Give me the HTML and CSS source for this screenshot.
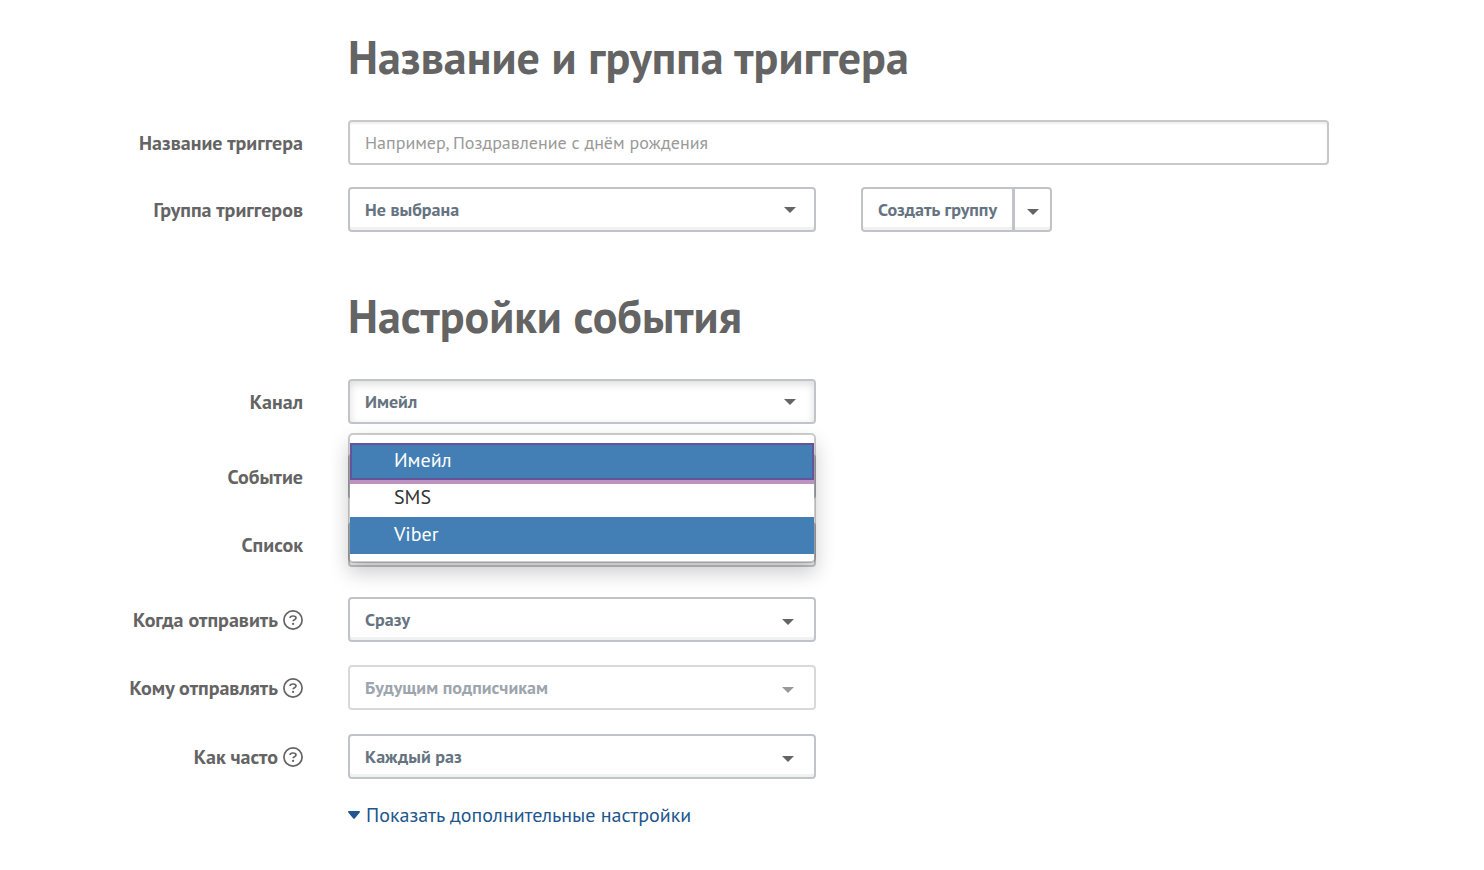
FILE: index.html
```html
<!DOCTYPE html>
<html lang="ru">
<head>
  <meta charset="utf-8">
  <meta name="viewport" content="width=device-width, initial-scale=1">
  <title>Название и группа триггера</title>
  <link rel="stylesheet" href="styles.css">
</head>
<body>
  <svg class="sprite" aria-hidden="true">
    <symbol id="help" viewBox="0 0 20 20">
      <circle cx="10" cy="10" r="9.100" fill="none" stroke="currentColor" stroke-width="1.7"/>
      <path d="M7.1 8C7.100 6.600 8.400 6 10 6s3 .7 3 2c0 1.800-2.900 1.600-2.900 3.300" fill="none" stroke="currentColor" stroke-width="1.7"/>
      <circle cx="10.1" cy="13.900" r="1.1" fill="currentColor"/>
    </symbol>
  </svg>
  <form class="form">
    <section class="section">
      <h2 class="title">Название и группа триггера</h2>
      <div class="row row-tight">
        <label class="label" for="name">Название триггера</label>
        <input class="control input wide" id="name" type="text" placeholder="Например, Поздравление с днём рождения">
      </div>
      <div class="row">
        <label class="label" for="group">Группа триггеров</label>
        <div class="select select-rich">
          <select class="control" id="group"><option>Не выбрана</option></select>
        </div>
        <div class="split">
          <button class="control split-main" type="button">Создать группу</button>
          <button class="control split-toggle" type="button" aria-haspopup="true"><span class="caret"></span></button>
        </div>
      </div>
    </section>

    <section class="section">
      <h2 class="title">Настройки события</h2>
      <div class="row row-spaced">
        <label class="label" for="channel">Канал</label>
        <div class="select select-rich">
          <select class="control pressed" id="channel"><option>Имейл</option></select>
          <ul class="menu" role="listbox">
            <li class="option selected focused" role="option" aria-selected="true">Имейл</li>
            <li class="option" role="option">SMS</li>
            <li class="option selected" role="option">Viber</li>
          </ul>
        </div>
      </div>
      <div class="row">
        <label class="label" for="event">Событие</label>
        <div class="select"><select class="control" id="event"></select></div>
      </div>
      <div class="row row-spaced">
        <label class="label" for="list">Список</label>
        <div class="select"><select class="control" id="list"></select></div>
      </div>
      <div class="row">
        <label class="label" for="when">Когда отправить <svg class="help"><use href="#help"/></svg></label>
        <div class="select"><select class="control" id="when"><option>Сразу</option></select></div>
      </div>
      <div class="row row-loose">
        <label class="label" for="whom">Кому отправлять <svg class="help"><use href="#help"/></svg></label>
        <div class="select select-disabled"><select class="control" id="whom" disabled><option>Будущим подписчикам</option></select></div>
      </div>
      <div class="row row-loose">
        <label class="label" for="often">Как часто <svg class="help"><use href="#help"/></svg></label>
        <div class="select"><select class="control" id="often"><option>Каждый раз</option></select></div>
      </div>
      <div class="row">
        <a class="more" href="#more"><svg class="more-caret" viewBox="0 0 12 8"><path d="M.8 0h10.4q1.2.3.5 1.5L7 7.2q-1 1-2 0L.3 1.500Q-.4.3.8 0Z" fill="currentColor"/></svg>Показать дополнительные настройки</a>
      </div>
    </section>
  </form>
</body>
</html>
```
FILE: styles.css
```css
* { box-sizing: border-box; }

body {
  margin: 0;
  background: #fff;
  color: #646464;
  font: 20px/24px "PT Sans", "Noto Sans", sans-serif;
}

.sprite { position: absolute; width: 0; height: 0; }

.form { padding: 30px 155px 40px 0; }

.section + .section { margin-top: 57px; }

.title {
  margin: 0 0 36px 348px;
  font-size: 46px;
  line-height: 54px;
  font-weight: 700;
}

.row {
  display: grid;
  grid-template-columns: 303px minmax(0, 1fr) minmax(0, 1fr);
  column-gap: 45px;
  align-items: center;
  margin-bottom: 23px;
}

.row:last-child { margin-bottom: 0; }
.row-tight { margin-bottom: 22px; }
.row-loose { margin-bottom: 24px; }
.row-spaced { margin-bottom: 30px; }

.label {
  display: flex;
  justify-content: flex-end;
  align-items: center;
  gap: 5px;
  font-weight: 700;
}

.help { width: 20px; height: 20px; }

.wide { grid-column: 2 / 4; }

.control {
  display: block;
  width: 100%;
  height: 45px;
  margin: 0;
  padding: 0 15px;
  border: 2px solid #c0c4c9;
  border-radius: 4px;
  background: #fff;
  box-shadow: inset 0 -3px 0 #f0f1f1;
  color: #667381;
  font: 700 18px/24px "PT Sans", "Noto Sans", sans-serif;
  appearance: none;
}

.input {
  border-color: #c9c9c9;
  box-shadow: inset 0 2px 2px #efefef;
  font-weight: 400;
}

.input::placeholder { color: #999; opacity: 1; }

.pressed { box-shadow: inset 0 3px 8px #dcdcdc; }

.select { position: relative; }

.select::after,
.caret {
  border: 6px solid transparent;
  border-top-color: #646464;
  border-bottom: 0;
}

.select::after {
  content: "";
  position: absolute;
  top: 22px;
  right: 22px;
  pointer-events: none;
}

.select-rich::after { top: 20px; right: 20px; }

.select-disabled::after { border-top-color: #999; }

.control:disabled {
  border-color: #d8dada;
  box-shadow: none;
  color: #9da5ae;
  opacity: 1;
}

.split { display: flex; }

.split-main {
  width: auto;
  border-radius: 4px 0 0 4px;
  border-right-width: 1px;
}

.split-toggle {
  display: flex;
  align-items: center;
  justify-content: center;
  width: 39px;
  padding: 4px 0 0;
  border-radius: 0 4px 4px 0;
}

.menu {
  position: absolute;
  z-index: 2;
  top: 54px;
  left: 0;
  right: 0;
  margin: 0;
  padding: 8px 0 7px;
  border: 2px solid rgba(0, 0, 0, .2);
  border-radius: 5px;
  background: #fff;
  background-clip: padding-box;
  box-shadow: 0 10px 20px rgba(0, 0, 0, .2);
  color: #333;
  list-style: none;
}

.option {
  height: 37px;
  padding: 5px 44px 8px;
}

.selected { background: #437fb5; color: #fff; }

.focused {
  position: relative;
  box-shadow: inset 0 0 0 2px #66549b, 0 4px 0 #bd92c0;
}

.more {
  display: flex;
  grid-column: 2 / 4;
  align-items: center;
  gap: 6px;
  color: #21558d;
  text-decoration: none;
}

.more-caret { width: 12px; height: 8px; }
```
